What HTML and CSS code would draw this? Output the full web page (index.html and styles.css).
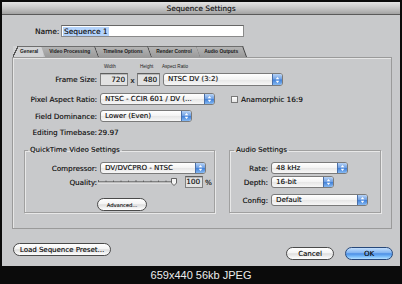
FILE: index.html
```html
<!DOCTYPE html>
<html>
<head>
<meta charset="utf-8">
<link rel="stylesheet" href="styles.css">
</head>
<body>
<div class="window">
  <div class="titlebar">Sequence Settings</div>

  <div class="name-row">
    <span class="name-lbl">Name:</span>
    <div class="name-field"><span class="sel">Sequence 1</span></div>
  </div>

  <div class="tabs">
    <div class="tab active">General</div>
    <div class="tab"><span class="tab-in">Video Processing</span></div>
    <div class="tab"><span class="tab-in">Timeline Options</span></div>
    <div class="tab"><span class="tab-in">Render Control</span></div>
    <div class="tab"><span class="tab-in">Audio Outputs</span></div>
  </div>

  <div class="panel">
    <div class="row row-frame">
      <span class="lbl lbl-tall">Frame Size:</span>
      <div class="fs-col">
        <span class="hdr hdr-w">Width</span>
        <span class="field num w720">720</span>
      </div>
      <span class="times">x</span>
      <div class="fs-col">
        <span class="hdr hdr-h">Height</span>
        <span class="field num w480">480</span>
      </div>
      <div class="fs-col col-ar">
        <span class="hdr hdr-ar">Aspect Ratio</span>
        <div class="popup p-ar"><span class="ptext">NTSC DV (3:2)</span><span class="parrow"><svg width="10" height="10" viewBox="0 0 10 10"><path d="M3 4.2 L5 1.8 L7 4.2Z M3 5.8 L5 8.2 L7 5.8Z" fill="#fff"/></svg></span></div>
      </div>
    </div>

    <div class="row row-par">
      <span class="lbl">Pixel Aspect Ratio:</span>
      <div class="popup p-par"><span class="ptext">NTSC - CCIR 601 / DV (...</span><span class="parrow"><svg width="10" height="10" viewBox="0 0 10 10"><path d="M3 4.2 L5 1.8 L7 4.2Z M3 5.8 L5 8.2 L7 5.8Z" fill="#fff"/></svg></span></div>
      <span class="check"></span>
      <span class="check-lbl">Anamorphic 16:9</span>
    </div>

    <div class="row row-fd">
      <span class="lbl">Field Dominance:</span>
      <div class="popup p-fd"><span class="ptext">Lower (Even)</span><span class="parrow"><svg width="10" height="10" viewBox="0 0 10 10"><path d="M3 4.2 L5 1.8 L7 4.2Z M3 5.8 L5 8.2 L7 5.8Z" fill="#fff"/></svg></span></div>
    </div>

    <div class="row row-et">
      <span class="lbl lbl-et">Editing Timebase:</span>
      <span class="val">29.97</span>
    </div>

    <div class="groups">
      <fieldset class="box box-qt">
        <legend>QuickTime Video Settings</legend>
        <div class="row">
          <span class="lbl lbl-qt">Compressor:</span>
          <div class="popup p-comp"><span class="ptext">DV/DVCPRO - NTSC</span><span class="parrow"><svg width="10" height="10" viewBox="0 0 10 10"><path d="M3 4.2 L5 1.8 L7 4.2Z M3 5.8 L5 8.2 L7 5.8Z" fill="#fff"/></svg></span></div>
        </div>
        <div class="row row-q">
          <span class="lbl lbl-qt">Quality:</span>
          <svg class="slider" width="81" height="10" viewBox="0 0 81 10">
            <line x1="1" y1="5" x2="77" y2="5" stroke="#3a3a3a" stroke-width="1"/>
            <line x1="1" y1="6" x2="77" y2="6" stroke="#f2f2f2" stroke-width="1"/>
            <g stroke="#555" stroke-width="0.8">
              <line x1="1.5" y1="3" x2="1.5" y2="5"/><line x1="9" y1="3.5" x2="9" y2="5"/><line x1="16.5" y1="3.5" x2="16.5" y2="5"/><line x1="24" y1="3.5" x2="24" y2="5"/><line x1="31.5" y1="3.5" x2="31.5" y2="5"/><line x1="39" y1="3" x2="39" y2="5"/><line x1="46.5" y1="3.5" x2="46.5" y2="5"/><line x1="54" y1="3.5" x2="54" y2="5"/><line x1="61.5" y1="3.5" x2="61.5" y2="5"/><line x1="69" y1="3.5" x2="69" y2="5"/>
            </g>
            <path d="M74.5 1.5 H79.5 V6 L77 8.5 L74.5 6Z" fill="#f4f4f4" stroke="#444" stroke-width="0.8"/>
          </svg>
          <span class="field num w100">100</span>
          <span class="pct">%</span>
        </div>
        <div class="adv-row">
          <span class="btn btn-adv">Advanced...</span>
        </div>
      </fieldset>

      <fieldset class="box box-au">
        <legend>Audio Settings</legend>
        <div class="row">
          <span class="lbl lbl-au">Rate:</span>
          <div class="popup p-rate"><span class="ptext">48 kHz</span><span class="parrow"><svg width="10" height="10" viewBox="0 0 10 10"><path d="M3 4.2 L5 1.8 L7 4.2Z M3 5.8 L5 8.2 L7 5.8Z" fill="#fff"/></svg></span></div>
        </div>
        <div class="row row-q">
          <span class="lbl lbl-au">Depth:</span>
          <div class="popup p-depth"><span class="ptext">16-bit</span><span class="parrow"><svg width="10" height="10" viewBox="0 0 10 10"><path d="M3 4.2 L5 1.8 L7 4.2Z M3 5.8 L5 8.2 L7 5.8Z" fill="#fff"/></svg></span></div>
        </div>
        <div class="row row-cfg">
          <span class="lbl lbl-au">Config:</span>
          <div class="popup p-cfg"><span class="ptext">Default</span><span class="parrow"><svg width="10" height="10" viewBox="0 0 10 10"><path d="M3 4.2 L5 1.8 L7 4.2Z M3 5.8 L5 8.2 L7 5.8Z" fill="#fff"/></svg></span></div>
        </div>
      </fieldset>
    </div>
  </div>

  <div class="buttons">
    <span class="btn btn-load">Load Sequence Preset...</span>
    <span class="spacer"></span>
    <span class="btn btn-cancel">Cancel</span>
    <span class="btn btn-ok">OK</span>
  </div>
</div>
<div class="caption">659x440 56kb JPEG</div>
</body>
</html>
```

FILE: styles.css
```css
* { box-sizing: border-box; }

body {
  margin: 0;
  width: 402px;
  height: 284px;
  padding: 2px 2px 0 2px;
  background: #0b0b0b;
  overflow: hidden;
  font-family: "DejaVu Sans", sans-serif;
  color: #161616;
}

.window {
  width: 398px;
  height: 264px;
  background: #c8c9cb;
  display: flex;
  flex-direction: column;
  text-shadow: 0.3px 0 0 rgba(20, 20, 20, 0.55);
}

.titlebar {
  height: 13px;
  border-bottom: 1px solid #5a5a5a;
  background: linear-gradient(#e4e4e4, #c4c4c4 55%, #a2a2a2);
  text-align: center;
  font-size: 7.4px;
  line-height: 14px;
  color: #1a1a1a;
}

/* Name */
.name-row {
  display: flex;
  align-items: center;
  margin-top: 10px;
  height: 12px;
  padding-left: 33px;
}
.name-lbl {
  width: 24px;
  text-align: right;
  margin-right: 2px;
  font-size: 7.4px;
}
.name-field {
  width: 183px;
  height: 12px;
  background: #fff;
  border: 1px solid #8a8a8a;
  border-top-color: #666;
  padding-left: 1px;
  display: flex;
  align-items: center;
  font-size: 7.4px;
}
.sel {
  background: #b4d3fb;
  line-height: 9px;
  padding: 0 1px;
}

/* Tabs */
.tabs {
  display: flex;
  margin-top: 9px;
  margin-left: 11px;
  height: 11px;
  font-family: "Liberation Sans", sans-serif;
  font-size: 4.9px;
  font-weight: bold;
  text-shadow: none;
}
.tab {
  height: 11px;
  line-height: 10px;
  padding: 0 6px;
  background: linear-gradient(#b3b3b3, #9a9a9a);
  border-top: 1px solid #6e6e6e;
  border-right: 1px solid #3d3d3d;
  transform: skewX(20deg);
  color: #1a1a1a;
}
.tab-in {
  display: inline-block;
  transform: skewX(-20deg);
}
.tab.active {
  transform: none;
  border: none;
  padding: 1px 5px 0 7px;
  background:
    linear-gradient(to bottom right, transparent calc(50% - 0.6px), #555 calc(50% - 0.6px), #555 calc(50% + 0.6px), #d2d3d5 calc(50% + 0.6px)) left top / 5px 100% no-repeat,
    linear-gradient(#6e6e6e, #6e6e6e) 4px 0 / 100% 1px no-repeat,
    #d2d3d5;
}

/* Panel */
.panel {
  margin-left: 10px;
  width: 380px;
  height: 172px;
  border: 1px solid #9a9a9a;
  box-shadow: inset 1px 1px 0 #e6e6e6;
  padding-top: 6px;
  font-size: 7.2px;
}

.row {
  display: flex;
  align-items: center;
  height: 12px;
}
.lbl {
  width: 84px;
  text-align: right;
  margin-right: 3px;
  white-space: nowrap;
}

.row-frame {
  height: auto;
  align-items: flex-end;
}
.lbl-tall { line-height: 13px; }
.fs-col {
  display: flex;
  flex-direction: column;
}
.hdr {
  font-family: "Liberation Sans", sans-serif;
  font-size: 4.6px;
  line-height: 6px;
  margin-bottom: 3px;
  white-space: nowrap;
  color: #222;
  text-shadow: none;
}
.hdr-w { padding-left: 4px; }
.hdr-h { padding-left: 3px; }
.hdr-ar { margin-left: -1px; }
.col-ar { margin-left: 3px; }

.field {
  height: 13px;
  background: #e2e2e2;
  border: 1px solid #7f7f7f;
  border-top-color: #5e5e5e;
  box-shadow: inset 0 1px 0 #b8b8b8;
  line-height: 11px;
}
.num { text-align: right; padding-right: 2px; }
.w720 { width: 28px; }
.w480 { width: 23px; }
.times {
  width: 9px;
  text-align: center;
  line-height: 10px;
}

.popup {
  display: flex;
  height: 12px;
  border: 1px solid #7a7a7a;
  border-radius: 3px;
  background: linear-gradient(#ffffff, #f3f3f3 50%, #e6e6e6 51%, #f7f7f7);
  overflow: hidden;
}
.row-frame .popup { height: 13px; }
.ptext {
  flex: 1;
  padding-left: 4px;
  line-height: 10px;
  white-space: nowrap;
  overflow: hidden;
  font-size: 7px;
}
.row-frame .ptext { line-height: 11px; }
.parrow {
  width: 10px;
  display: flex;
  align-items: center;
  justify-content: center;
  background: linear-gradient(#b7d3f6, #6e9fe3 48%, #3f7fd8 52%, #86b9f2);
  border-left: 1px solid #4a6fa8;
}
.p-ar { width: 120px; }
.p-par { width: 115px; }
.p-fd { width: 92px; }

.row-par { margin-top: 7px; }
.check {
  width: 7px;
  height: 7px;
  margin-left: 16px;
  border: 1px solid #787878;
  background: linear-gradient(#ffffff, #e4e4e4);
}
.check-lbl { margin-left: 3px; }

.row-fd { margin-top: 5px; }
.row-et { margin-top: 4px; }
.lbl-et { margin-right: 1px; }

/* Group boxes */
.groups {
  display: flex;
  margin-top: 8px;
  margin-left: 11px;
}
.box {
  margin: 0;
  min-width: 0;
  padding: 8px 0 1px 0;
  border: 1px solid #a0a0a0;
  box-shadow: inset 1px 1px 0 #e8e8e8, 1px 1px 0 #e8e8e8;
}
.box legend {
  font-size: 7px;
  line-height: 8px;
  padding: 0 2px;
}
.box-qt { width: 191px; }
.box-qt legend { margin-left: 3px; }
.box-au { width: 152px; margin-left: 14px; }
.box-au legend { margin-left: 4px; }

.lbl-qt { width: 72px; }
.lbl-au { width: 38px; }
.p-comp { width: 106px; }
.p-rate { width: 77px; }
.p-depth { width: 63px; }
.p-cfg { width: 97px; }

.row-q { margin-top: 2px; }
.row-cfg { margin-top: 6px; }
.slider { margin-left: -3px; display: block; }
.w100 { width: 18px; height: 12px; margin-left: 7px; line-height: 10px; }
.pct { margin-left: 2px; }

.adv-row {
  display: flex;
  margin-top: 10px;
  padding-left: 72px;
}

/* Buttons */
.btn {
  display: flex;
  align-items: center;
  justify-content: center;
  height: 13px;
  border: 1px solid #4a4a4a;
  border-radius: 7px;
  background: linear-gradient(#ffffff, #f4f4f4 45%, #dedede 52%, #f2f2f2 80%, #ffffff);
  white-space: nowrap;
  color: #111;
}
.btn-adv {
  width: 50px;
  font-size: 5.2px;
}

.buttons {
  display: flex;
  align-items: flex-start;
  margin-top: 14px;
  padding-left: 11px;
  padding-right: 7px;
  font-size: 7px;
}
.spacer { flex: 1; }
.btn-load { width: 98px; }
.btn-cancel { width: 48px; margin-top: 4px; }
.btn-ok {
  width: 48px;
  margin-top: 4px;
  margin-left: 11px;
  border-color: #27487a;
  background: linear-gradient(#c3defc, #7fb3f1 45%, #4b8ee6 52%, #7ec0fb 80%, #b8e0ff);
}

.caption {
  height: 18px;
  line-height: 18px;
  text-align: center;
  font-family: "Liberation Sans", sans-serif;
  font-size: 11px;
  color: #ececec;
}
```
